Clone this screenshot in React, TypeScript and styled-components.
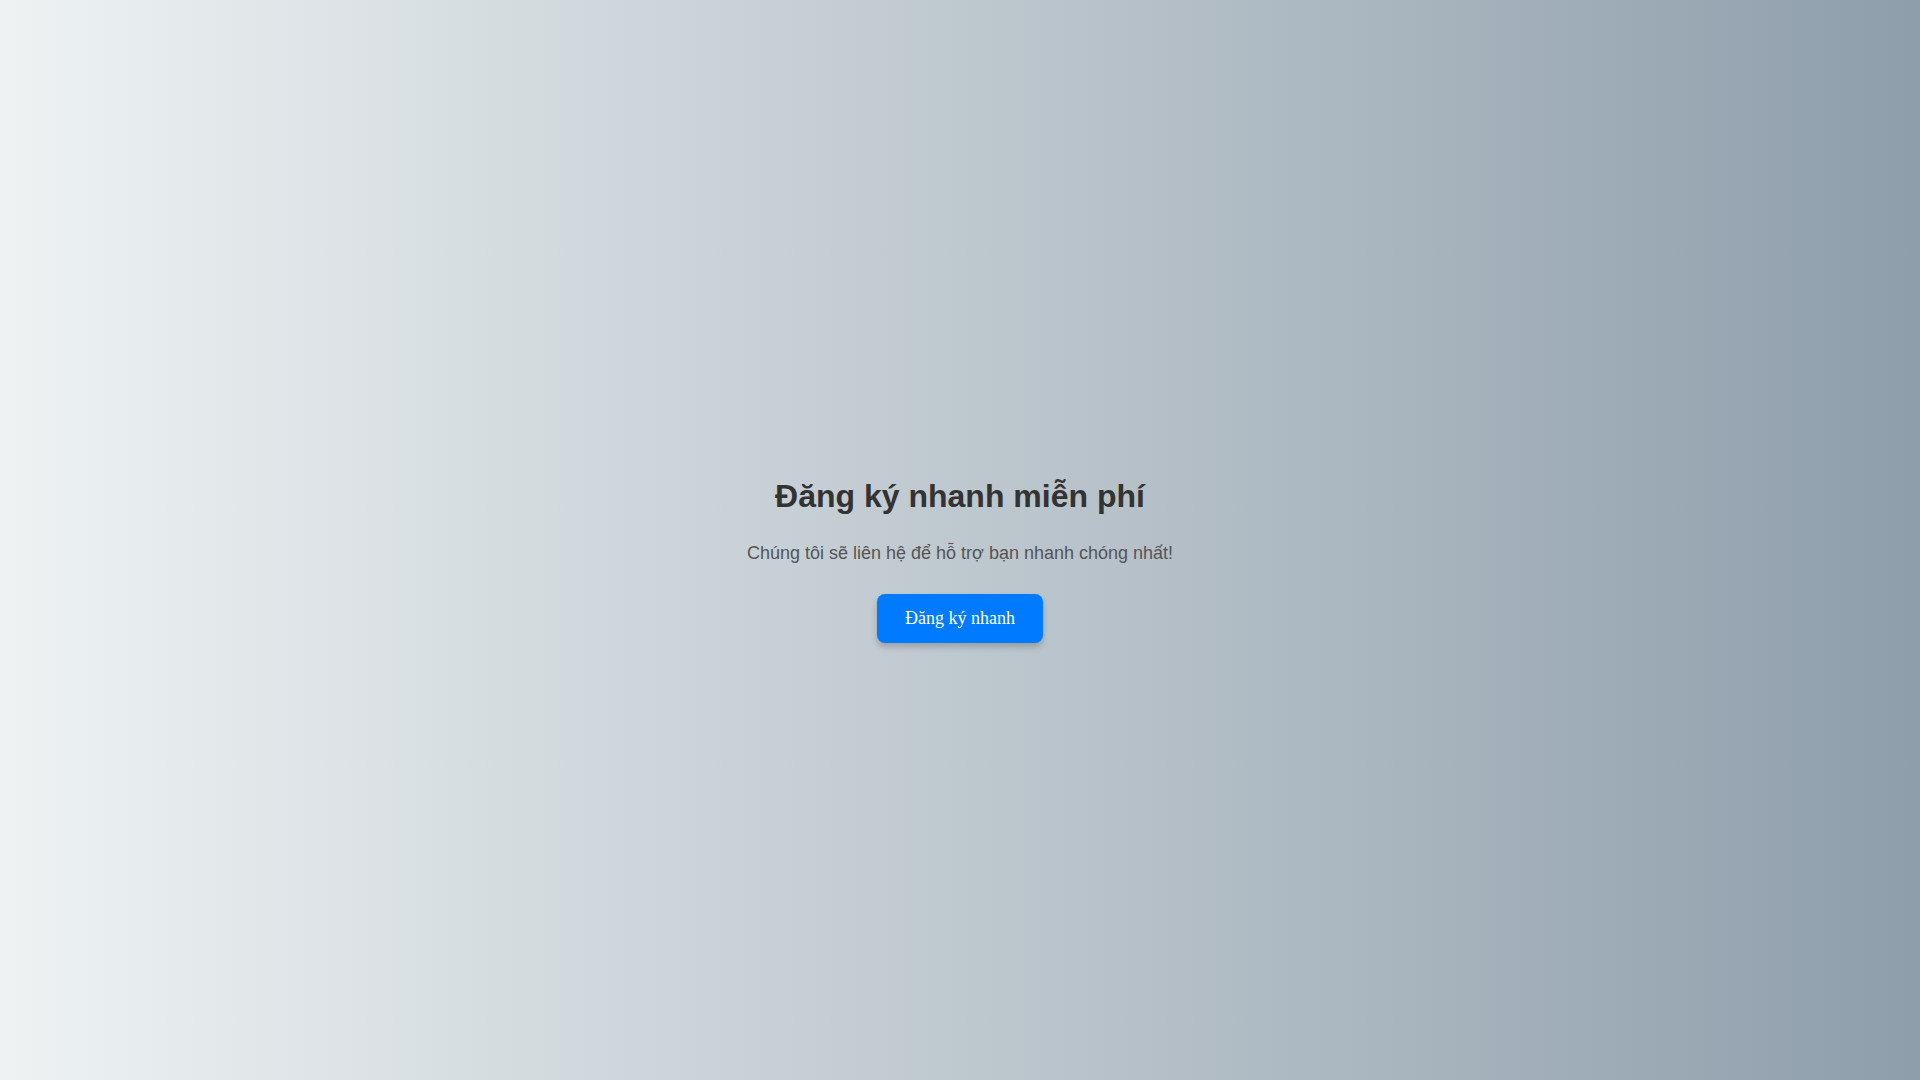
import React from "react"
import styled, { createGlobalStyle } from "styled-components"

const GlobalStyle = createGlobalStyle`
  body {
    margin: 0;
    font-family: "Liberation Sans", Arial, sans-serif;
  }
`

const Page = styled.div`
  min-height: 100vh;
  padding: 20px;
  display: flex;
  flex-direction: column;
  align-items: center;
  justify-content: center;
  background: linear-gradient(to right, #eef2f3, #8e9eab);
  text-align: center;
`

const Title = styled.h1`
  margin: 0 0 28px;
  font-size: 32px;
  font-weight: bold;
  color: #333;
`

const Subtitle = styled.p`
  margin: 0 0 30px;
  font-size: 18px;
  color: #555;
`

const SignupButton = styled.button`
  background: #007bff;
  color: #fff;
  border: none;
  border-radius: 8px;
  padding: 14px 28px;
  font-family: "Liberation Serif", "Times New Roman", serif;
  font-size: 18px;
  box-shadow: 0 4px 6px rgba(0, 0, 0, 0.2);
  cursor: pointer;
`

export default function App() {
  return (
    <>
      <GlobalStyle />
      <Page>
        <Title>Đăng ký nhanh miễn phí</Title>
        <Subtitle>Chúng tôi sẽ liên hệ để hỗ trợ bạn nhanh chóng nhất!</Subtitle>
        <SignupButton>Đăng ký nhanh</SignupButton>
      </Page>
    </>
  )
}
